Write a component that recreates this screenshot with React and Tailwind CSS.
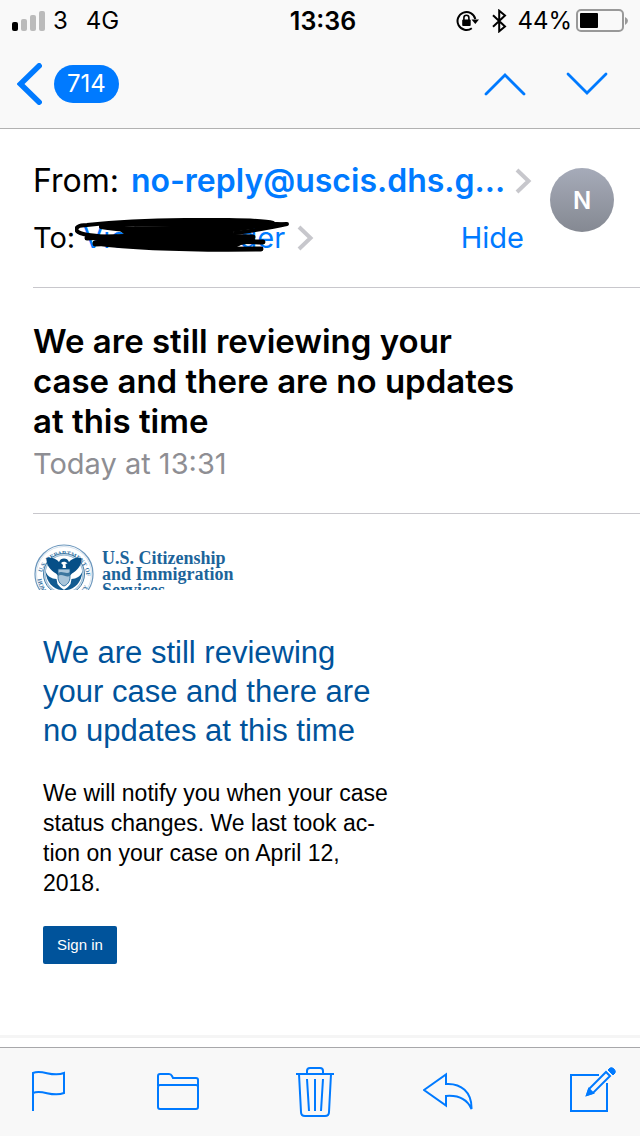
import { useState } from "react";

function StatusBar() {
  return (
    <div className="grid h-10 grid-cols-3 items-center px-3 pt-px text-[24px] leading-10 text-black">
      <div className="flex items-center">
        <svg className="mr-2 h-5 w-[33px]" viewBox="0 0 33 20" aria-hidden="true">
          <rect x="0" y="11" width="6" height="9" rx="2" fill="#000" />
          <rect x="9" y="8" width="6" height="12" rx="2" fill="#bbb" />
          <rect x="18" y="4" width="6" height="16" rx="2" fill="#bbb" />
          <rect x="27" y="0" width="6" height="20" rx="2" fill="#bbb" />
        </svg>
        <span>3</span>
        <span className="ml-[18px]">4G</span>
      </div>
      <span className="pl-1.5 text-center text-[25px] font-semibold">13:36</span>
      <div className="flex items-center justify-end">
        <svg className="mr-3 h-[22px] w-6 shrink-0" viewBox="0 0 24 22" fill="none" stroke="#000" strokeWidth="2" aria-hidden="true">
          <path d="M15.8 18.3A9 9 0 1 1 19.3 9" />
          <path d="M15.5 9.5h7.5l-3.7 4.5z" fill="#000" stroke="none" />
          <rect x="6.2" y="9.5" width="8.5" height="6.5" rx="1" fill="#000" stroke="none" />
          <path d="M7.9 10V7.8a2.5 2.5 0 0 1 5 0V10" strokeWidth="1.6" />
        </svg>
        <svg className="mr-2.5 h-6 w-[15px] shrink-0" viewBox="0 0 15 24" fill="none" stroke="#000" strokeWidth="2" aria-hidden="true">
          <path d="M1 6.2l12 11.3-5.8 4.8V1.700L13 6.500 1 17.800" />
        </svg>
        <span className="mr-1">44%</span>
        <svg className="h-6 w-[52px] shrink-0" viewBox="0 0 52 24" aria-hidden="true">
          <rect x="1" y="1" width="46" height="21" rx="4" fill="none" stroke="#999" strokeWidth="2" />
          <rect x="4" y="4" width="18" height="15" rx="1" fill="#000" />
          <path d="M49 8q3 1.5 3 3.8T49 16z" fill="#999" />
        </svg>
      </div>
    </div>
  );
}

function NavBar() {
  return (
    <nav className="flex h-[88px] items-center justify-between pr-8 pl-[17px]">
      <button type="button" className="flex items-center gap-3" aria-label="Back">
        <svg className="h-[42px] w-[25px]" viewBox="0 0 25 42" fill="none" stroke="#007aff" strokeWidth="5.5" strokeLinecap="round">
          <path d="M22.2 2.8L3.5 21l18.7 18.2" strokeLinejoin="miter" />
        </svg>
        <span className="h-[38px] rounded-full bg-[#007aff] px-[13px] text-[24px] leading-[38px] text-white">714</span>
      </button>
      <div className="flex items-center gap-10">
        <button type="button" aria-label="Previous message">
          <svg className="h-6 w-[42px]" viewBox="0 0 42 24" fill="none" stroke="#007aff" strokeWidth="2.8" strokeLinecap="round">
            <path d="M2 22L21 3l19 19" />
          </svg>
        </button>
        <button type="button" aria-label="Next message">
          <svg className="h-6 w-[42px]" viewBox="0 0 42 24" fill="none" stroke="#007aff" strokeWidth="2.8" strokeLinecap="round">
            <path d="M2 2l19 19L40 2" />
          </svg>
        </button>
      </div>
    </nav>
  );
}

function Chevron() {
  return (
    <svg className="h-[26px] w-[17px] shrink-0" viewBox="0 0 17 26" fill="none" stroke="#c7c7cc" strokeWidth="4" aria-hidden="true">
      <path d="M2 2l11.5 11L2 24" />
    </svg>
  );
}

// marker strokes over the recipient's name
function Scribble() {
  return (
    <svg className="absolute top-0 left-0 h-10 w-[216px]" viewBox="0 0 216 40" fill="none" stroke="#000" strokeWidth="4" strokeLinecap="round" strokeLinejoin="round" aria-hidden="true">
      <path d="M198 5C185 1 80 0 12 7 3 7 0 10 2 13c4 5 22 5 44 7" />
      <path d="M26 8c60-4 110 0 186-2-20 4-34 7-52 9" />
      <path d="M26 9c20 3 34 3 50 6" />
      <path d="M70 4q60-4 120 0l-10 4H60z" fill="#000" strokeWidth="1" />
      <path d="M40 9L150 7 202 4 212 6 158 14 160 17 178 19 182 24 166 27 160 30 90 30 66 27 20 27 22 23 12 20 50 17z" fill="#000" stroke="none" />
      <path d="M12 20c50-3 120-2 166-1M20 26c60-3 110-4 168-2M20 25c40 5 90 7 166 6" strokeWidth="5" />
    </svg>
  );
}

function Seal() {
  return (
    <svg className="h-[60px] w-[60px] shrink-0" viewBox="0 0 60 60" aria-hidden="true">
      <defs>
        <path id="seal-top" d="M7.6 31.5A22.5 22.5 0 0 1 52.4 31.5" />
        <path id="seal-bottom" d="M3.5 32A26.5 26.5 0 0 0 56.5 32" />
      </defs>
      <circle cx="30" cy="30" r="29" fill="#fff" stroke="#6c97bd" strokeWidth="1.2" />
      <circle cx="30" cy="30" r="27.5" fill="none" stroke="#b8cfe1" strokeWidth="0.6" />
      <g fill="#33719f" className="font-['Liberation_Serif',serif] text-[6px] font-bold">
        <text>
          <textPath href="#seal-top" startOffset="3">U.S. DEPARTMENT OF</textPath>
        </text>
        <text>
          <textPath href="#seal-bottom" startOffset="3">HOMELAND SECURITY</textPath>
        </text>
      </g>
      <circle cx="30" cy="30" r="20.5" fill="#cfdfeb" stroke="#33719f" strokeWidth="0.9" />
      <circle cx="30" cy="30" r="18.8" fill="#fff" stroke="#6998bd" strokeWidth="0.6" />
      <path d="M12.5 14c6-1 10 1 12.5 4 1-2.5 2.5-3.5 5-3.5s4 1 5 3.5c2.5-3 6.5-5 12.5-4 .5 7-4 12.5-9.5 15.5L36 31.5H24L22 29.5c-5.500-3-10-8.500-9.500-15.500z" fill="#064f87" />
      <path d="M27 19c2-2 5-1.5 6.5.5l-2 .5.5 4h-3.500l.5-3z" fill="#fff" />
      <path d="M24 25h12v8c0 5-3 8-6 9-3-1-6-4-6-9z" fill="#a9c5da" stroke="#125b91" strokeWidth="0.8" />
      <path d="M24 29c4-3 8 2 12-1v4c-4 2-8-3-12 0z" fill="#3c769f" />
      <path d="M11.5 27c2 6 6 7.5 11 8l1 5c2 3 5 5 7 6-9 1-18-6-19-19zM48.5 27c-2 6-6 7.5-11 8l-1 5c-2 3-5 5-7 6 9 1 18-6 19-19z" fill="#125b91" />
    </svg>
  );
}

function MessageHeader({ details, onToggle }) {
  return (
    <header className="ml-[33px] flex border-b border-[#c8c7cc] pt-[31px] pb-7">
      <div className="min-w-0 flex-1">
        <div className="flex h-[42px] items-center gap-3">
          <span className="text-[32px]">From:</span>
          <a href="#sender" className="flex items-center gap-2.5 text-[32px] font-semibold whitespace-nowrap text-[#007aff]">
            no-reply@uscis.dhs.g...
            <Chevron />
          </a>
        </div>
        <div className="mt-4 mb-px flex h-10 items-center justify-between pr-2 text-[29px]">
          {details && (
            <div className="flex items-center">
              <span>To:</span>
              <a href="#recipient" className="relative flex h-10 w-[212px] items-center justify-between pr-0.5 pl-2 text-[#007aff]">
                <span>Vic</span>
                <span>der</span>
                <Scribble />
              </a>
              <span className="ml-2.5">
                <Chevron />
              </span>
            </div>
          )}
          <button type="button" className="ml-auto text-[#007aff]" onClick={onToggle}>
            {details ? "Hide" : "Details"}
          </button>
        </div>
      </div>
      <div className="mt-2 mr-[26px] ml-[18px] flex h-16 w-16 shrink-0 items-center justify-center rounded-full bg-linear-to-b from-[#a6abb9] to-[#858992] pt-0.5 text-[24px] font-semibold text-white">
        N
      </div>
    </header>
  );
}

function MailBody() {
  return (
    <article className="px-[34px] pt-[30px] font-['Liberation_Sans',Arial,sans-serif]">
      <div className="flex h-[46px] gap-2 overflow-hidden">
        <Seal />
        <p className="pt-[6px] font-['Liberation_Serif',serif] text-[18px] leading-4 font-bold text-[#1c649a]">
          U.S. Citizenship
          <br />
          and Immigration
          <br />
          Services
        </p>
      </div>
      <div className="px-[9px] pt-[43px]">
        <h2 className="text-[31px] leading-[39px] text-[#00539b]">
          We are still reviewing
          <br />
          your case and there are
          <br />
          no updates at this time
        </h2>
        <p className="mt-7 text-[23px] leading-[30px] text-black">
          We will notify you when your case
          <br />
          status changes. We last took ac-
          <br />
          tion on your case on April 12,
          <br />
          2018.
        </p>
        <a href="#sign-in" className="mt-7 inline-block rounded-xs bg-[#00539b] px-[14px] text-[15px] leading-[38px] text-white">
          Sign in
        </a>
      </div>
    </article>
  );
}

function Toolbar() {
  return (
    <footer className="flex h-[89px] items-center justify-between border-t border-[#a7a7aa] bg-[#f8f8f8] pr-6 pl-8">
      <button type="button" aria-label="Flag">
        <svg className="h-14 w-9" viewBox="12 0 36 56" fill="none" stroke="#007aff" strokeWidth="2">
          <path d="M13 47V9c10-4 19 5 31 0v20c-12 5-21-4-31 0" />
        </svg>
      </button>
      <button type="button" aria-label="Move to folder">
        <svg className="h-14 w-[50px]" viewBox="7 0 50 56" fill="none" stroke="#007aff" strokeWidth="2">
          <path d="M8 22V12q0-2 2-2h9q2 0 3 2l1 2h23q2 0 2 2v27q0 2-2 2H10q-2 0-2-2V23q0-2 2-2h36q2 0 2 2" />
        </svg>
      </button>
      <button type="button" aria-label="Delete">
        <svg className="h-14 w-[38px]" viewBox="9 0 38 56" fill="none" stroke="#007aff" strokeWidth="2">
          <path d="M9 10h38M20 10V7q0-3 3-3h10q3 0 3 3v3M12 10l2 38q0 4 4 4h20q4 0 4-4l2-38M20 15l2 32M28 15v32M36 15l-2 32" />
        </svg>
      </button>
      <button type="button" aria-label="Reply">
        <svg className="h-14 w-[58px]" viewBox="4 0 58 56" fill="none" stroke="#007aff" strokeWidth="2">
          <path d="M5 26L27 10.5V20C42 19 53 28 52.5 45 48 35 40 31 27 32v9.5z" />
        </svg>
      </button>
      <button type="button" aria-label="New message">
        <svg className="h-14 w-[46px]" viewBox="6 0 46 56" fill="none" stroke="#007aff" strokeWidth="2">
          <path d="M35 11H7v36h36V19" />
          <path d="M23 31l2-6L42 8l4 4-17 17z" />
          <path d="M23 31l2-6 4 4z" fill="#007aff" />
          <path d="M44 6l2-2q2-1 4 1t1 4l-2 2z" fill="#007aff" strokeWidth="1" />
        </svg>
      </button>
    </footer>
  );
}

function App() {
  const [details, setDetails] = useState(true);

  return (
    <div className="flex min-h-screen flex-col bg-white font-[Inter,sans-serif] text-black">
      <div className="border-b border-[#b2b2b2] bg-[#f9f9f9]">
        <StatusBar />
        <NavBar />
      </div>
      <main className="flex-1">
        <MessageHeader details={details} onToggle={() => setDetails(!details)} />
        <section className="ml-[33px] border-b border-[#c8c7cc] pt-[33px] pb-[29px]">
          <h1 className="text-[33px] leading-10 font-semibold">
            We are still reviewing your
            <br />
            case and there are no updates
            <br />
            at this time
          </h1>
          <p className="mt-[3px] text-[29px] leading-10 text-[#8e8e93]">Today at 13:31</p>
        </section>
        <MailBody />
      </main>
      <div className="mb-[9px] h-[3px] bg-[#f5f5f5]" />
      <Toolbar />
    </div>
  );
}

export default App;
